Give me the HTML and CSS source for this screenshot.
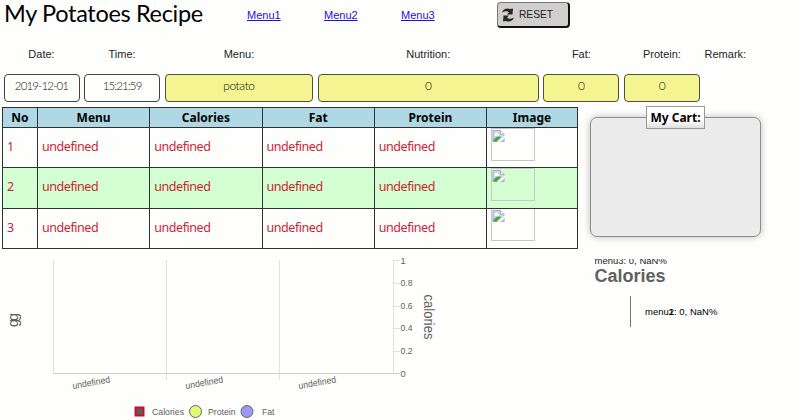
FILE: index.html
```
<!DOCTYPE html>
<html lang="en">
<head>
<meta charset="utf-8">
<title>My Potatoes Recipe</title>
<link rel="stylesheet" href="styles.css">
</head>
<body>
<svg class="defs" width="0" height="0">
  <symbol id="broken" viewBox="0 0 14 14">
    <path d="M1 1h8l4 4v8H1z" fill="#c6d8f3" stroke="#a3a9ae"/>
    <path d="M9 1v4h4" fill="#fff" stroke="#a3a9ae"/>
    <path d="M3 6a2 2 0 0 1 4-1l1 2H3z" fill="#fff"/>
    <path d="M1 13C3 8 6 7 10 8l-5 5z" fill="#4ea63b"/>
    <path d="M5 14L14 6V8.500L8 14z" fill="#fff"/>
  </symbol>
</svg>
<header class="top">
  <h1>My Potatoes Recipe</h1>
  <nav><a href="#">Menu1</a><a href="#">Menu2</a><a href="#">Menu3</a></nav>
  <button class="reset">
    <svg width="12" height="14" viewBox="0 0 12 14"><path d="M0 4.500C1 1 5-.5 8 1L11 .5 10.500 6.500 5 6.500 7 4.500C5 2.500 3 3 0 4.500zM12 9.500C11 13 7 14.500 4 13L1 13.500 1.500 7.500 7 7.500 5 9.500C7 11.500 9 11 12 9.500z" fill="#292725"/></svg>
    <span>RESET</span>
  </button>
</header>
<section class="summary">
  <label>Date:</label><label>Time:</label><label>Menu:</label><label>Nutrition:</label><label>Fat:</label><label>Protein:</label><label class="remark">Remark:</label>
  <output class="plain">2019-12-01</output><output class="plain">15:21:59</output><output>potato</output><output>0</output><output>0</output><output>0</output>
</section>
<main class="middle">
  <table>
    <colgroup><col class="c-no"><col class="c-w"><col class="c-w"><col class="c-w"><col class="c-w"><col class="c-img"></colgroup>
    <thead><tr><th>No</th><th>Menu</th><th>Calories</th><th>Fat</th><th>Protein</th><th>Image</th></tr></thead>
    <tbody>
      <tr><td>1</td><td>undefined</td><td>undefined</td><td>undefined</td><td>undefined</td><td><div class="pic"><svg width="13" height="14"><use href="#broken"/></svg></div></td></tr>
      <tr><td>2</td><td>undefined</td><td>undefined</td><td>undefined</td><td>undefined</td><td><div class="pic"><svg width="13" height="14"><use href="#broken"/></svg></div></td></tr>
      <tr><td>3</td><td>undefined</td><td>undefined</td><td>undefined</td><td>undefined</td><td><div class="pic"><svg width="13" height="14"><use href="#broken"/></svg></div></td></tr>
    </tbody>
  </table>
  <fieldset class="cart"><legend>My Cart:</legend></fieldset>
</main>
<section class="charts">
  <svg width="580" height="164" viewBox="0 256 580 164">
    <g stroke="#e2e2e2" fill="none">
      <path d="M53.500 260V374M166.500 260V380M279.500 260V380M393.500 260V374"/>
      <path d="M393 260.500h7M393 283.500h7M393 306.500h7M393 328.500h7M393 351.500h7"/>
      <path d="M53 373.500H400" stroke="#d0d0d0"/>
    </g>
    <g class="tick">
      <text x="400.500" y="263.500">1</text><text x="400.500" y="286" textLength="12" lengthAdjust="spacingAndGlyphs">0.8</text><text x="400.500" y="309" textLength="12" lengthAdjust="spacingAndGlyphs">0.6</text><text x="400.500" y="331" textLength="12" lengthAdjust="spacingAndGlyphs">0.4</text><text x="400.500" y="354" textLength="12" lengthAdjust="spacingAndGlyphs">0.2</text><text x="400.500" y="376.500">0</text>
      <text transform="translate(73 389) rotate(-10)" textLength="38" lengthAdjust="spacingAndGlyphs">undefined</text>
      <text transform="translate(186 389) rotate(-10)" textLength="38" lengthAdjust="spacingAndGlyphs">undefined</text>
      <text transform="translate(299 389) rotate(-10)" textLength="38" lengthAdjust="spacingAndGlyphs">undefined</text>
      <text x="152" y="414.500" textLength="32" lengthAdjust="spacingAndGlyphs">Calories</text>
      <text x="208" y="414.500" textLength="27.500" lengthAdjust="spacingAndGlyphs">Protein</text>
      <text x="262" y="414.500" textLength="12.500" lengthAdjust="spacingAndGlyphs">Fat</text>
    </g>
    <text class="axis" transform="translate(423.500 294.500) rotate(90)" textLength="45" lengthAdjust="spacingAndGlyphs">calories</text>
    <text class="axis" transform="translate(18 327) rotate(-90)">g</text>
    <text class="axis" transform="translate(18 321) rotate(-90)">g</text>
    <rect x="135.500" y="407.500" width="8" height="8" fill="#5f5b5b" stroke="#c9102b" stroke-width="2"/>
    <circle cx="195.500" cy="411.500" r="6" fill="#dffb76" stroke="#666"/>
    <circle cx="247" cy="411.500" r="6" fill="#9d98f6" stroke="#666"/>
  </svg>
  <div class="pie">
    <div class="clip"><span>menu3: 0, NaN%</span></div>
    <h2>Calories</h2>
    <div class="slice">menu<span class="digits">2<i>1</i></span>: 0, NaN%</div>
  </div>
</section>
</body>
</html>
```
FILE: styles.css
```
* { box-sizing: border-box; }
body { margin: 0; width: 800px; height: 420px; overflow: hidden; background: #fefefd; color: #1d1d1d; font-family: "Liberation Sans", Arial, sans-serif; font-size: 11px; }
.defs { display: block; }
.top { display: flex; height: 43px; }
h1 { margin: 0; padding-left: 4px; width: 247px; font: 400 23.5px/26px Lato, sans-serif; letter-spacing: -.33px; color: #000; white-space: nowrap; }
nav { display: flex; width: 250px; padding-top: 8px; line-height: 14px; }
nav a { width: 77px; color: #1b10d8; }
.reset { display: flex; align-items: center; gap: 5px; width: 73px; height: 26px; margin: 2px 0 0; padding: 0 0 0 4px; border: 1px solid #777; border-right: 2px solid #111; border-bottom: 2px solid #111; border-radius: 4px; background: #d0cece; color: #222; font: 10.200px "Liberation Sans", sans-serif; }
.summary { display: grid; grid-template-columns: 76px 76px 148.500px 221px 76px 76px 50px; grid-template-rows: 31px 28px; column-gap: 4.600px; height: 64px; padding-left: 3.500px; text-align: center; }
.summary label { padding-top: 4px; line-height: 14px; }
.summary .remark { text-align: left; }
.summary output { border: 1px solid #51503a; border-radius: 4px; background: #f4f491; font: 300 12px/22px Lato, sans-serif; letter-spacing: -.4px; color: #101008; }
.summary .plain { background: #fefefd; border-color: #444; font-size: 11.500px; letter-spacing: -.85px; }
.middle { display: flex; height: 145px; padding-left: 2px; }
table { width: 576px; height: 142px; table-layout: fixed; border-collapse: collapse; font-family: "Noto Sans", sans-serif; font-size: 12.500px; }
.c-no { width: 35px; }
.c-w { width: 112.250px; }
.c-img { width: 91px; }
th, td { border: 1px solid #303030; padding: 0 3px; line-height: 18px; }
th { height: 20px; padding: 0; background: #afd8e4; color: #000; font-size: 12px; font-weight: 700; }
td { height: 40px; padding: 0 3px 1px 4px; color: #cf1d35; text-align: left; letter-spacing: -.45px; }
tbody tr:nth-child(2) { background: #d3ffd3; }
.pic { width: 44px; height: 33px; margin-top: -6px; border: 1px solid #c8c8c8; }
.pic svg { display: block; }
.cart { width: 171px; height: 131px; margin: -1px 0 0 12px; padding: 0; border: 1.500px solid #8d8d8d; border-radius: 7px; background: #ebebeb; box-shadow: 0 0 7px #bbb; }
.cart legend { width: 59px; height: 23px; margin: 0 auto; padding: 0; border: 1px solid #999; background: linear-gradient(#fff 65%, #ddd); color: #000; font: 700 12px/21px "Noto Sans", sans-serif; text-align: center; white-space: nowrap; }
.charts { display: flex; padding-top: 4px; }
.charts > svg { display: block; flex: none; }
.tick { font-size: 9.300px; fill: #606060; }
.axis { font-size: 14.500px; fill: #606060; }
.pie { padding: 3px 0 0 14.500px; font-size: 9.500px; color: #222; }
.clip { display: flex; align-items: flex-end; height: 7px; overflow: hidden; line-height: 11px; }
h2 { margin: 0; color: #606060; font-size: 18px; line-height: 21px; }
.slice { width: 130px; height: 31px; margin: 9px 0 0 35.500px; padding-left: 14px; border-left: 1px solid #777; line-height: 32px; color: #000; white-space: nowrap; }
.digits { position: relative; }
.digits i { position: absolute; left: 0; top: 0; line-height: 11px; font-style: normal; }
```
